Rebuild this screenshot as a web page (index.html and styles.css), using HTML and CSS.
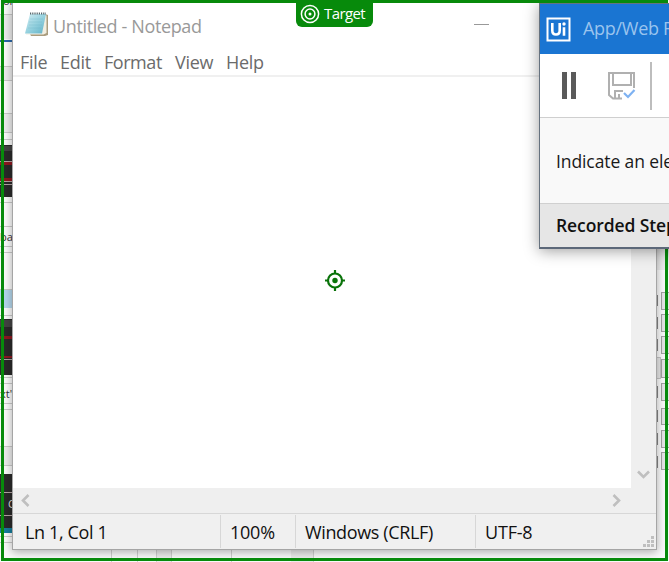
FILE: index.html
```html
<!DOCTYPE html>
<html lang="en">
<head>
<meta charset="utf-8">
<title>Untitled - Notepad</title>
<link rel="stylesheet" href="styles.css">
</head>
<body>
<main class="desktop">
  <svg class="backdrop" width="669" height="562" shape-rendering="crispEdges" aria-hidden="true">
    <path fill="#fafafa" d="M0 0h669v562H0z"/>
    <path fill="#ececec" d="M0 14h13v25H0zM0 67h13v13H0zM0 114h13v18H0zM0 447h13v18H0zM657 249h12v21h-12z"/>
    <path fill="#c9c9c9" d="M0 14h13v1H0zM0 66h13v1H0zM0 80h13v1H0zM0 113h13v1H0zM0 132h13v1H0zM0 139h13v1H0zM0 202h13v1H0zM0 226h13v1H0zM0 246h13v1H0zM0 252h13v1H0zM0 289h13v1H0zM0 315h13v1H0zM0 377h13v1H0zM0 383h13v1H0zM0 403h13v1H0zM0 409h13v1H0zM0 446h13v1H0zM0 465h13v1H0zM0 536h13v1H0zM0 542h13v1H0z"/>
    <path fill="#2b67a8" d="M0 40h13v2H0z"/>
    <path fill="#b4d6ec" d="M0 290h13v18H0z"/>
    <path fill="#292929" d="M0 145h13v52H0zM0 319h13v56H0zM0 474h13v58H0z"/>
    <path fill="#434343" d="M0 146h13v5H0zM0 320h13v7H0z"/>
    <path fill="#8d1820" d="M0 162h13v3H0zM0 178h13v3H0zM0 336h13v3H0zM0 356h13v2H0z"/>
    <path fill="#b3a3a3" d="M0 161h13v1H0zM0 181h13v1H0zM0 184h13v1H0zM0 359h13v1H0zM0 492h13v1H0zM0 515h13v1H0z"/>
    <path fill="#157c9b" d="M0 528h13v5H0z"/>
    <path fill="#d0d0d0" d="M111 550h1v12h-1zM137 550h1v12h-1zM156 550h1v12h-1zM171 550h1v12h-1zM231 550h1v12h-1zM313 550h1v12h-1z"/>
    <path fill="#ececec" d="M157 550h14v12h-14zM291 550h22v12h-22z"/>
    <g fill="#e6e6e6" stroke="#858585">
      <path d="M652.5 295.5h5v10h-5zM652.5 317.5h5v11h-5zM652.5 339.5h5v11h-5zM652.5 386.5h5v11h-5zM652.5 410.5h5v11h-5zM652.5 433.5h5v11h-5zM652.5 456.5h5v11h-5z"/>
      <path stroke="#a2a2a2" d="M661.5 292.5h9v17h-9zM661.5 314.5h9v17h-9zM661.5 336.5h9v17h-9zM661.5 359.5h9v18h-9zM661.5 383.5h9v17h-9zM661.5 408.5h9v16h-9zM661.5 430.5h9v17h-9zM661.5 452.5h9v17h-9z"/>
      <path stroke="#c4c4c4" d="M655.5 357.5h5v21h-5z"/>
    </g>
  </svg>
  <span class="scrap scrap-top">or</span>
  <span class="scrap scrap-ba">ba</span>
  <span class="scrap scrap-ext">xt"</span>
  <span class="scrap scrap-dark">C</span>

  <section class="notepad">
    <header class="titlebar">
      <svg class="pad-icon" width="26" height="28" viewBox="0 0 26 28" aria-hidden="true">
        <defs><linearGradient id="pad" x1="0" y1="0" x2="1" y2="1"><stop offset="0" stop-color="#d3eef3"/><stop offset=".55" stop-color="#91cfdd"/><stop offset="1" stop-color="#5fb0c5"/></linearGradient></defs>
        <path fill="#a99c7e" d="M21 3l3 1v20l-3 1H7l-1-2h14z"/>
        <path fill="#f1eee0" d="M20 4l2.500 .5V22l-3 1.500H2v-1h16z"/>
        <path fill="url(#pad)" d="M6 3h16l-4 19.500H1z"/>
        <path stroke="#63adbf" stroke-width=".6" opacity=".4" d="M6 8h13M5 11h13M5 14h13M4 17h13"/>
        <path stroke="#56676c" stroke-width="1.8" stroke-dasharray="1.2 1" d="M6 2.500h16"/>
      </svg>
      <h1 class="title">Untitled - Notepad</h1>
      <span class="minimize"></span>
    </header>
    <nav class="menu">
      <span class="m-file">File</span><span class="m-edit">Edit</span><span class="m-format">Format</span><span class="m-view">View</span><span class="m-help">Help</span>
    </nav>
    <div class="editor">
      <div class="page"></div>
      <div class="vscroll">
        <svg width="13" height="10" viewBox="0 0 13 10"><path fill="none" stroke="#bfbfbf" stroke-width="2.6" d="M1 1.5l5.500 5.500L12 1.500"/></svg>
      </div>
    </div>
    <div class="hscroll">
      <svg width="10" height="13" viewBox="0 0 10 13"><path fill="none" stroke="#bfbfbf" stroke-width="2.6" d="M8.500 1L3 6.500 8.500 12"/></svg>
      <svg width="10" height="13" viewBox="0 0 10 13"><path fill="none" stroke="#bfbfbf" stroke-width="2.6" d="M1.500 1L7 6.500 1.500 12"/></svg>
    </div>
    <footer class="status">
      <span class="cell c-pos">Ln 1, Col 1</span>
      <span class="cell c-zoom">100%</span>
      <span class="cell c-eol">Windows (CRLF)</span>
      <span class="cell c-enc">UTF-8</span>
      <svg class="grip" width="11" height="11" shape-rendering="crispEdges"><path fill="#bfbfbf" d="M8 0h3v3H8zM4 4h3v3H4zM8 4h3v3H8zM0 8h3v3H0zM4 8h3v3H4zM8 8h3v3H8z"/></svg>
    </footer>
  </section>

  <div class="highlight"></div>
  <div class="tag">
    <svg width="20" height="20" viewBox="0 0 20 20" fill="none" stroke="#fff" stroke-width="1.5"><circle cx="10" cy="10" r="8.600"/><circle cx="10" cy="10" r="4.900"/><circle cx="10" cy="10" r="1.500" fill="#fff" stroke="none"/></svg>
    <span>Target</span>
  </div>
  <svg class="anchor" width="22" height="22" viewBox="0 0 22 22" fill="none" stroke="#0a730a" stroke-width="2.200"><circle cx="11" cy="11.500" r="7"/><circle cx="11" cy="11.500" r="2.700" fill="#0a730a" stroke="none"/><path d="M11 1V5M11 18v4M1 11.500H4.500M17.500 11.500H21"/></svg>

  <aside class="recorder">
    <header class="rec-title">
      <svg width="25" height="25" viewBox="0 0 25 25" fill="none" stroke="#fff"><path stroke-width="2" d="M1.500 1.500h22v22h-22z"/><path stroke-width="2.600" d="M6.300 6v7.500q0 4 3.700 4t3.700-4V6M18 10.200v8.600"/><circle cx="18" cy="7" r="1.700" fill="#fff" stroke="none"/></svg>
      <span>App/Web Recorder</span>
    </header>
    <div class="tools">
      <svg class="pause" width="14" height="27" shape-rendering="crispEdges"><path fill="#5a5a5a" d="M0 0h5v27H0zM9 0h5v27H9z"/></svg>
      <svg class="save" width="28" height="28" viewBox="0 0 28 28" fill="none" stroke="#b0b0b0" stroke-width="2"><path d="M26 16V1H1v22l4 3.500h9M5 1v12h18V1M7 26v-7h8M11 26v-4"/><path stroke="#7eb2f2" stroke-width="2.200" d="M16 21l4 4 6.500-7"/></svg>
      <span class="sep"></span>
    </div>
    <p class="hint">Indicate an element</p>
    <h2 class="steps">Recorded Steps</h2>
  </aside>
</main>
</body>
</html>
```
FILE: styles.css
```css
* { box-sizing: border-box; }
body { margin: 0; font-family: "Open Sans", "Noto Sans", sans-serif; font-size: 18px; }
h1, h2, p { margin: 0; font-weight: 400; font-size: 18px; }
svg { display: block; flex: none; }
.desktop { position: relative; width: 669px; height: 562px; overflow: hidden; background: #fff; }
.backdrop { position: absolute; inset: 0; }
.scrap { position: absolute; left: 0; font-size: 11px; line-height: 12px; color: #333; }
.scrap-top { top: -5px; left: 3px; }
.scrap-ba { top: 231px; }
.scrap-ext { top: 388px; }
.scrap-dark { top: 498px; left: 8px; color: #ddd; }

.notepad {
  position: absolute; left: 12px; top: 0; width: 645px; height: 550px;
  display: flex; flex-direction: column; background: #fff;
  border: 1px solid #a5a5a5; border-top: 0;
  box-shadow: 0 2px 9px rgba(0, 0, 0, .32);
}
.titlebar { display: flex; align-items: center; height: 50px; padding: 1px 0 0 11px; flex: none; }
.pad-icon { margin-top: -2px; }
.title { width: 421px; margin-left: 3px; color: #999; letter-spacing: -.37px; white-space: nowrap; }
.minimize { width: 15px; height: 1px; background: #999; margin-top: -2px; }
.menu { display: flex; align-items: center; height: 25px; padding: 0 0 2px 7px; color: #6b6b6b; flex: none; letter-spacing: -.3px; }
.m-file { width: 40px; }
.m-edit { width: 44px; }
.m-format { width: 71px; letter-spacing: -.45px; }
.m-view { width: 51px; }
.editor { display: flex; height: 413px; border-top: 2px solid #f0f0f0; flex: none; }
.page { flex: 1; }
.vscroll { width: 25px; background: #efefef; display: flex; align-items: flex-end; justify-content: center; padding-bottom: 8px; }
.hscroll { height: 25px; background: #efefef; display: flex; align-items: center; justify-content: space-between; padding: 0 34px 0 7px; flex: none; }
.status { height: 36px; flex: none; display: flex; align-items: center; background: #f0f0f0; border-top: 1px solid #d7d7d7; }
.cell { height: 33px; line-height: 35px; border-right: 1px solid #d7d7d7; white-space: nowrap; color: #111; letter-spacing: -.37px; }
.c-pos { width: 208px; padding-left: 12px; }
.c-zoom { width: 75px; padding-left: 9px; letter-spacing: -.25px; }
.c-eol { width: 180px; padding-left: 9px; }
.c-enc { flex: 1; border: 0; padding-left: 9px; letter-spacing: -.2px; }
.grip { margin: 20px 2px 0 0; }

.highlight { position: absolute; left: 1px; top: 0; width: 667px; height: 561px; border: 3px solid #078a0b; }
.tag {
  position: absolute; left: 296px; top: 0; width: 77px; height: 27px; padding-left: 4px;
  display: flex; align-items: center; gap: 4px;
  background: #078a0b; color: #fff; font-size: 15px; letter-spacing: -.6px; border-radius: 0 0 6px 6px;
}
.tag span { margin-top: -1px; }
.anchor { position: absolute; left: 324px; top: 269px; }

.recorder {
  position: absolute; left: 539px; top: 3px; width: 150px; height: 246px;
  display: flex; flex-direction: column;
  border: 1px solid #66727f; border-bottom: 2px solid #5c6879; background: #f9f9f9; white-space: nowrap;
  box-shadow: 0 2px 14px rgba(0, 0, 0, .38);
  clip-path: inset(0 0 -25px -25px);
}
.rec-title { height: 50px; flex: none; display: flex; align-items: center; gap: 12px; padding: 0 0 2px 6px; background: #1a75d2; color: #9bc4ee; letter-spacing: -.3px; }
.rec-title svg { margin-top: 2px; }
.tools { height: 64px; flex: none; display: flex; align-items: center; padding-left: 22px; background: #fff; border-bottom: 1px solid #cfcfcf; }
.save { margin-left: 32px; }
.sep { width: 2px; height: 48px; margin-left: 14px; background: #bdbdbd; }
.hint { height: 85px; flex: none; line-height: 86px; padding-left: 16px; color: #1a1a1a; font-size: 17.5px; letter-spacing: -.1px; }
.steps { flex: 1; line-height: 42px; padding-left: 16px; background: #e6e6e6; border-top: 1px solid #d0d0d0; font-weight: 600; font-size: 17.5px; letter-spacing: -.1px; color: #111; }
```
